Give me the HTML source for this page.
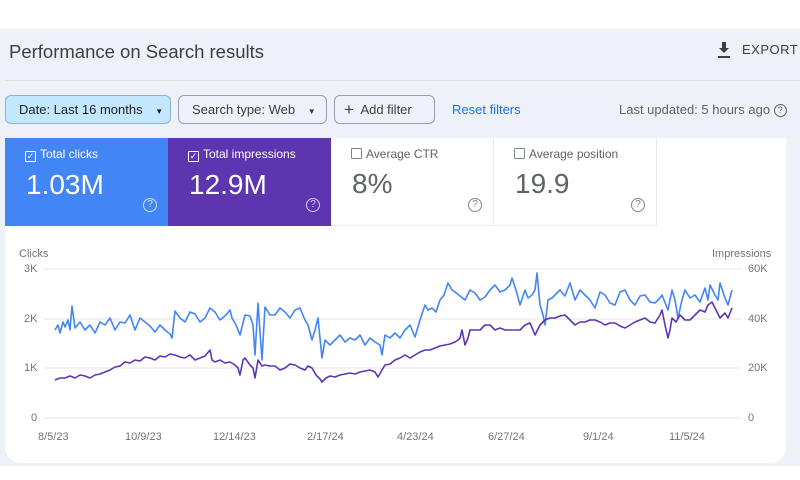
<!DOCTYPE html>
<html><head><meta charset="utf-8"><style>
*{margin:0;padding:0;box-sizing:border-box}
body{width:800px;height:480px;background:#fff;font-family:"Liberation Sans",sans-serif;position:relative;overflow:hidden}
.bg{position:absolute;left:0;top:29px;width:800px;height:437px;background:#eef2f8}
.title{position:absolute;left:9px;top:41px;font-size:18.5px;color:#3c4043}
.export{position:absolute;left:716px;top:42px;font-size:13px;color:#3c4043;letter-spacing:.5px}
.div{position:absolute;left:5px;right:0;top:80px;border-top:1px solid #dcdfe4}
.btn{position:absolute;top:95px;height:29px;border:1px solid #9aa0a6;border-radius:6px;font-size:13px;color:#3c4043;line-height:27px;padding-left:13px}
.card{position:absolute;left:5px;top:138px;width:781px;height:325px;background:#fff;border-radius:0 0 16px 16px}
.tile{position:absolute;top:138px;width:163px;height:88px;font-size:12px;padding:9px 0 0 20px}
.tile .v{font-size:28px;margin-top:7px;margin-left:1px}
.cb{display:inline-block;width:11px;height:11px;border:1px solid;vertical-align:-1px;margin-right:4px;position:relative;border-radius:1px}
.q{position:absolute;right:11px;top:60px;width:14px;height:14px;border:1px solid;border-radius:50%;font-size:10px;text-align:center;line-height:12px}
.ax{position:absolute;font-size:11px;color:#70757a}
</style></head><body>
<div class="bg"></div>
<div class="title">Performance on Search results</div>
<svg style="position:absolute;left:716px;top:41px" width="16" height="18" viewBox="0 0 16 18"><path d="M6 1h4v6h3l-5 5-5-5h3z M2 15h12v2H2z" fill="#3c4043"/></svg>
<div class="export" style="left:742px">EXPORT</div>
<div class="div"></div>
<div class="btn" style="left:5px;width:166px;background:#c2e7ff;border-color:#8ab4d8;color:#1f1f1f">Date: Last 16 months <span style="font-size:8px;margin-left:9px">▼</span></div>
<div class="btn" style="left:178px;width:149px">Search type: Web <span style="font-size:8px;margin-left:9px">▼</span></div>
<div class="btn" style="left:334px;width:101px;padding-left:9px"><span style="font-size:17px;vertical-align:-1px">+</span>&nbsp; Add filter</div>
<div style="position:absolute;left:452px;top:102px;font-size:13px;color:#1a73e8">Reset filters</div>
<div style="position:absolute;left:619px;top:102px;font-size:13px;color:#5f6368">Last updated: 5 hours ago <span style="display:inline-block;width:13px;height:13px;border:1px solid #5f6368;border-radius:50%;font-size:9px;text-align:center;line-height:11px;vertical-align:1px">?</span></div>
<div class="card"></div>
<div class="tile" style="left:5px;background:#4285f4;color:#fff"><span class="cb" style="border-color:#fff;font-size:9px;line-height:9px;text-align:center">✓</span>Total clicks<div class="v">1.03M</div><div class="q" style="border-color:#d0e0fc;color:#d0e0fc">?</div></div>
<div class="tile" style="left:168px;background:#5e35b1;color:#fff"><span class="cb" style="border-color:#fff;font-size:9px;line-height:9px;text-align:center">✓</span>Total impressions<div class="v">12.9M</div><div class="q" style="border-color:#d6c8f0;color:#d6c8f0">?</div></div>
<div class="tile" style="left:331px;color:#5f6368;border-right:1px solid #e8eaed;border-bottom:1px solid #e8eaed;width:163px"><span class="cb" style="border-color:#80868b"></span>Average CTR<div class="v">8%</div><div class="q" style="border-color:#80868b;color:#80868b">?</div></div>
<div class="tile" style="left:494px;color:#5f6368;border-right:1px solid #e8eaed;border-bottom:1px solid #e8eaed;width:163px"><span class="cb" style="border-color:#80868b"></span>Average position<div class="v">19.9</div><div class="q" style="border-color:#80868b;color:#80868b">?</div></div>
<div class="ax" style="left:19px;top:248px">Clicks</div>
<div class="ax" style="left:712px;top:248px">Impressions</div>
<div class="ax" style="left:24px;top:263px">3K</div>
<div class="ax" style="left:24px;top:313px">2K</div>
<div class="ax" style="left:24px;top:362px">1K</div>
<div class="ax" style="left:31px;top:412px">0</div>
<div class="ax" style="left:748px;top:263px">60K</div>
<div class="ax" style="left:748px;top:313px">40K</div>
<div class="ax" style="left:748px;top:362px">20K</div>
<div class="ax" style="left:748px;top:412px">0</div>
<div class="ax" style="left:38px;top:431px">8/5/23</div>
<div class="ax" style="left:125px;top:431px">10/9/23</div>
<div class="ax" style="left:213px;top:431px">12/14/23</div>
<div class="ax" style="left:307px;top:431px">2/17/24</div>
<div class="ax" style="left:397px;top:431px">4/23/24</div>
<div class="ax" style="left:488px;top:431px">6/27/24</div>
<div class="ax" style="left:583px;top:431px">9/1/24</div>
<div class="ax" style="left:669px;top:431px">11/5/24</div>
<svg style="position:absolute;left:0;top:0" width="800" height="480">
<g stroke="#e3e5e8" stroke-width="1"><line x1="44" x2="742" y1="269" y2="269"/><line x1="44" x2="742" y1="319" y2="319"/><line x1="44" x2="742" y1="368" y2="368"/><line x1="44" x2="742" y1="418" y2="418"/></g>
<polyline fill="none" stroke="#4285f4" stroke-width="1.6" stroke-linejoin="round" points="55,330 58,325 60,333 63,322 65,327 68,320 70,330 72,306 75,328 80,322 85,330 90,325 95,333 100,322 105,325 110,318 115,330 120,322 125,323 130,315 135,330 140,318 145,322 150,326 155,332 160,325 165,330 170,334 172,338 175,311 180,318 185,322 190,312 195,314 200,322 205,318 210,308 215,312 220,320 225,316 230,310 232,318 236,325 240,335 245,315 250,316 253,325 255,355 258,303 262,360 265,307 270,315 275,315 280,308 285,312 290,318 295,310 300,308 305,320 308,325 312,340 315,330 318,318 322,358 325,340 330,345 335,340 340,335 345,342 350,338 355,340 360,335 365,345 370,338 375,342 380,345 382,355 385,335 390,338 395,333 400,338 405,330 410,325 415,337 420,320 425,305 428,310 432,308 436,312 440,300 444,295 448,283 452,290 455,292 460,296 465,300 470,290 475,293 480,300 485,297 490,290 495,285 500,292 505,290 510,285 512,278 516,290 520,305 525,290 528,298 532,295 535,290 537,273 540,305 543,315 545,325 548,300 552,298 556,294 560,290 565,296 570,283 575,300 580,290 585,295 590,300 595,308 600,292 605,295 610,303 615,305 620,292 625,290 630,300 635,305 640,296 645,295 650,302 655,303 660,298 662,295 666,305 668,310 672,290 675,300 678,318 682,300 685,290 690,298 695,295 700,302 705,288 708,300 710,285 715,295 718,300 720,283 723,292 725,298 728,305 732,290"/>
<polyline fill="none" stroke="#5e35b1" stroke-width="1.6" stroke-linejoin="round" points="55,380 60,378 65,378 70,376 75,378 80,375 85,376 90,378 95,375 100,374 105,372 110,370 115,367 120,366 125,362 130,363 135,360 140,361 145,357 150,358 155,360 160,356 165,357 170,354 175,355 180,357 185,358 190,355 195,360 200,358 205,356 210,350 212,360 215,362 220,360 225,363 230,362 235,365 238,368 240,375 243,360 245,358 250,365 253,368 255,378 258,360 262,366 265,365 270,366 275,366 280,370 285,368 290,364 295,365 300,368 305,370 308,366 312,368 316,375 320,379 322,382 326,378 330,376 335,377 340,375 345,374 350,373 355,374 360,372 365,371 370,370 375,372 378,377 382,370 385,365 390,364 395,360 400,358 405,355 410,358 415,355 420,352 425,350 430,350 435,348 440,346 445,345 450,344 455,342 458,340 460,338 462,330 465,345 468,338 470,330 475,330 480,330 485,325 490,325 495,330 500,328 505,330 510,330 515,330 520,330 525,325 530,323 533,330 535,335 540,325 545,320 550,318 555,318 560,316 565,315 570,320 575,325 580,322 585,322 590,320 595,320 600,322 605,325 610,323 615,323 620,326 625,328 630,325 635,322 640,320 645,318 650,322 655,323 660,315 662,310 665,325 668,338 670,330 672,318 676,322 680,315 685,320 690,320 695,315 700,310 705,312 708,305 712,302 716,310 720,318 723,315 725,313 728,318 732,308"/>
</svg>
</body></html>
